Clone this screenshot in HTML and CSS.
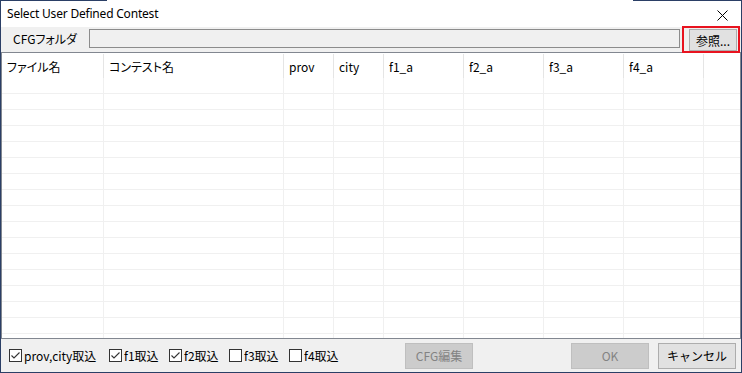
FILE: index.html
```html
<!DOCTYPE html>
<html lang="ja">
<head>
    <meta charset="UTF-8">
    <title>Select User Defined Contest</title>
    <link rel="stylesheet" href="styles.css">
</head>
<body>
    <div class="window">
        <div class="top-edge"></div>
        <div class="titlebar">
            <span class="title">Select User Defined Contest</span>
            <svg class="close" width="11" height="11" viewBox="0 0 11 11">
                <path d="M0.5 0.5 L10.5 10.5 M10.5 0.5 L0.5 10.5" stroke="#000" stroke-width="1" fill="none"/>
            </svg>
        </div>

        <div class="folder-row">
            <span class="folder-label">CFGフォルダ</span>
            <div class="textbox"></div>
            <button class="btn browse">参照...</button>
            <div class="highlight"></div>
        </div>

        <div class="list">
            <div class="list-head">
                <div class="hcell c-file">ファイル名</div>
                <div class="hcell c-name">コンテスト名</div>
                <div class="hcell c-short">prov</div>
                <div class="hcell c-short">city</div>
                <div class="hcell c-f">f1_a</div>
                <div class="hcell c-f">f2_a</div>
                <div class="hcell c-f">f3_a</div>
                <div class="hcell c-f">f4_a</div>
                <div class="hcell c-rest"></div>
            </div>
            <div class="list-body">
                <div class="bcol c-file"></div>
                <div class="bcol c-name"></div>
                <div class="bcol c-short"></div>
                <div class="bcol c-short"></div>
                <div class="bcol c-f"></div>
                <div class="bcol c-f"></div>
                <div class="bcol c-f"></div>
                <div class="bcol c-f"></div>
                <div class="bcol c-rest"></div>
            </div>
        </div>

        <div class="footer">
            <label class="opt opt-wide"><span class="box checked"></span>prov,city取込</label>
            <label class="opt"><span class="box checked"></span>f1取込</label>
            <label class="opt"><span class="box checked"></span>f2取込</label>
            <label class="opt"><span class="box"></span>f3取込</label>
            <label class="opt"><span class="box"></span>f4取込</label>
            <button class="btn disabled cfg-edit">CFG編集</button>
            <div class="spacer"></div>
            <button class="btn disabled action">OK</button>
            <button class="btn action">キャンセル</button>
        </div>
    </div>
</body>
</html>
```

FILE: styles.css
```css
body {
    margin: 0;
    font-family: "Noto Sans CJK JP", sans-serif;
    font-size: 12px;
    color: #000;
    background: #fff;
}
.window {
    width: 742px;
    height: 373px;
    box-sizing: border-box;
    border: 1px solid #2b3f66;
    border-top: none;
    background: #f0f0f0;
    display: flex;
    flex-direction: column;
    position: relative;
}
/* desktop shows through the top edge only at both ends */
.top-edge {
    height: 1px;
    margin: 0 -1px;
    background: linear-gradient(to right, #2b3f66 0 107px, #fff 107px 633px, #2b3f66 633px);
}
.titlebar {
    height: 26px;
    background: #fff;
    display: flex;
    align-items: center;
    padding-left: 6px;
}
.title {
    flex: 1;
    font-family: "Noto Sans", sans-serif;
    font-size: 12px;
    letter-spacing: -0.2px;
    padding-bottom: 1px;
}
.close { margin-right: 13px; margin-top: 2px; }

.folder-row {
    height: 25px;
    box-sizing: border-box;
    display: flex;
    align-items: flex-start;
    padding: 2px 0 0 12px;
}
.folder-label {
    width: 76px;
    line-height: 19px;
    font-feature-settings: "palt";
}
.textbox {
    width: 591px;
    height: 19px;
    box-sizing: border-box;
    border: 1px solid #8c8c8c;
    background: #f0f0f0;
}
.btn {
    font-family: "Noto Sans CJK JP", sans-serif;
    font-size: 12px;
    background: #e1e1e1;
    border: 1px solid #adadad;
    color: #000;
    padding: 0;
    margin: 0;
    box-sizing: border-box;
}
.browse {
    width: 48px;
    height: 22px;
    margin-left: 9px;
}
.highlight {
    position: absolute;
    left: 681px;
    top: 26px;
    width: 58px;
    height: 27px;
    box-sizing: border-box;
    border: 2px solid #e8131f;
}

.list {
    height: 287px;
    box-sizing: border-box;
    border: 1px solid #828790;
    background: #fff;
    display: flex;
    flex-direction: column;
    overflow: hidden;
}
.list-head {
    height: 25px;
    display: flex;
    flex-shrink: 0;
}
.hcell {
    box-sizing: border-box;
    border-right: 1px solid #e5e5e5;
    margin-top: 1px;
    padding: 4px 0 0 5px;
    line-height: 18px;
    font-feature-settings: "palt";
    white-space: nowrap;
}
.list-body {
    flex: 1;
    display: flex;
    background: repeating-linear-gradient(to bottom, transparent 0 15px, #f0f0f0 15px 16px);
}
.bcol {
    box-sizing: border-box;
    border-right: 1px solid #f0f0f0;
}
.c-file { width: 102px; }
.c-name { width: 180px; }
.c-short { width: 50px; }
.c-f { width: 80px; }
.c-rest { flex: 1; border-right: none; }

.footer {
    flex: 1;
    display: flex;
    align-items: center;
    padding: 0 5px 0 8px;
}
.opt {
    width: 60px;
    display: flex;
    align-items: center;
    white-space: nowrap;
    font-feature-settings: "palt";
}
.opt-wide { width: 100px; }
.box {
    width: 13px;
    height: 13px;
    box-sizing: border-box;
    border: 1px solid #333;
    background: #fff;
    margin-right: 2px;
    flex-shrink: 0;
}
.box.checked {
    background: #fff url("data:image/svg+xml,%3Csvg xmlns='http://www.w3.org/2000/svg' width='11' height='11'%3E%3Cpath d='M1.5 5.5 L4 8 L9.5 2.5' stroke='%23333' stroke-width='1.1' fill='none'/%3E%3C/svg%3E") no-repeat center;
}
.btn.disabled {
    background: #cccccc;
    border-color: #bfbfbf;
    color: #838383;
}
.cfg-edit {
    width: 68px;
    height: 26px;
    margin-left: 56px;
}
.spacer { flex: 1; }
.action {
    width: 78px;
    height: 26px;
    margin-left: 9px;
}
```
